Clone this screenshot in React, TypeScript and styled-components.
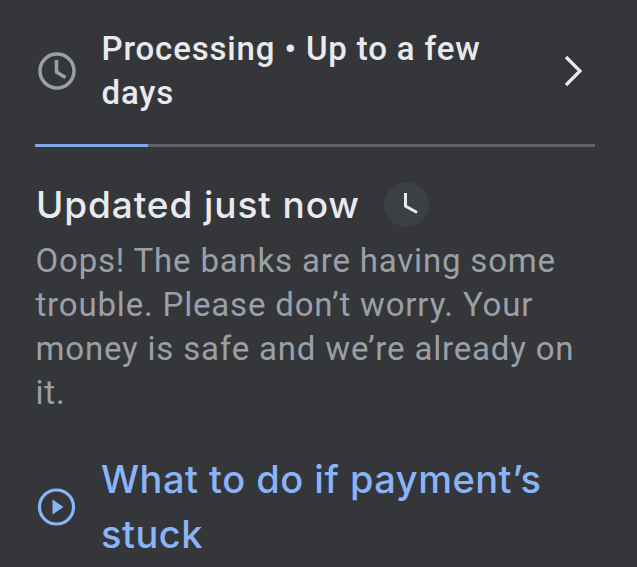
import React from "react";
import styled, { createGlobalStyle } from "styled-components";

const GlobalStyle = createGlobalStyle`
  html, body { margin: 0; padding: 0; background: #35363a; }
  body { font-family: Roboto, "Liberation Sans", sans-serif; overflow: hidden; }
`;

const Page = styled.div`
  width: 637px;
  height: 567px;
  overflow: hidden;
  background: #35363a;
  padding: 26px 42px 0 35px;
  box-sizing: border-box;
`;

const StatusRow = styled.div`
  display: flex;
  align-items: center;
  height: 90px;
`;

const StatusIcon = styled.div`
  width: 67px;
  display: flex;
  flex: none;
`;

const StatusText = styled.div`
  flex: 1;
  padding-right: 40px;
  margin-left: -0.5px;
  color: #e8eaed;
  font-size: 33px;
  font-weight: 500;
  line-height: 44px;
  letter-spacing: 0.85px;
`;

const Chevron = styled.div`
  flex: none;
  display: flex;
  margin-right: 9px;
`;

const Track = styled.div`
  height: 3px;
  margin-top: 28px;
  background: #5f6368;
`;

const TrackFill = styled.div`
  height: 100%;
  background: #80a8e6;
`;

const Heading = styled.div`
  display: flex;
  align-items: center;
  gap: 24px;
  margin-top: 35px;
`;

const HeadingText = styled.h2`
  margin: 0 0 0 1px;
  color: #e8eaed;
  font-family: Inter, Roboto, sans-serif;
  font-size: 37px;
  font-weight: 500;
  line-height: 44px;
  letter-spacing: 0.9px;
`;

const ClockBadge = styled.div`
  width: 45px;
  height: 45px;
  border-radius: 50%;
  background: #3c4043;
  display: flex;
  align-items: center;
  justify-content: center;
`;

const Body = styled.p`
  margin: 12px 0 0 0.5px;
  color: #9aa0a6;
  font-size: 33px;
  line-height: 44px;
  letter-spacing: 0.82px;
`;

const HelpRow = styled.div`
  display: flex;
  align-items: center;
  margin-top: 37px;
`;

const HelpIcon = styled.div`
  width: 66px;
  flex: none;
  display: flex;
  padding-left: 2px;
  box-sizing: border-box;
`;

const HelpLink = styled.a`
  color: #8ab4f8;
  font-family: Inter, Roboto, sans-serif;
  font-size: 38px;
  font-weight: 500;
  line-height: 55px;
  letter-spacing: 0.5px;
`;

export default function App() {
  const progress = 20.2;
  return (
    <>
      <GlobalStyle />
      <Page>
        <StatusRow>
          <StatusIcon>
            <svg width="44" height="44" viewBox="0 0 44 44" fill="none" stroke="#9aa0a6" strokeWidth="3.5">
              <circle cx="22" cy="22" r="17" />
              <path d="M21.5 11v12l9 5.5" />
            </svg>
          </StatusIcon>
          <StatusText>Processing • Up to a few days</StatusText>
          <Chevron>
            <svg width="24" height="36" viewBox="0 0 24 36" fill="none" stroke="#e8eaed" strokeWidth="3.2">
              <path d="M4 4l14 14L4 32" />
            </svg>
          </Chevron>
        </StatusRow>
        <Track>
          <TrackFill style={{ width: `${progress}%` }} />
        </Track>
        <Heading>
          <HeadingText>Updated just now</HeadingText>
          <ClockBadge>
            <svg width="45" height="45" viewBox="0 0 45 45" fill="none" stroke="#e8eaed" strokeWidth="3">
              <path d="M21.5 11v13l11.5 6.5" />
            </svg>
          </ClockBadge>
        </Heading>
        <Body>Oops! The banks are having some trouble. Please don’t worry. Your money is safe and we’re already on it.</Body>
        <HelpRow>
          <HelpIcon>
            <svg width="40" height="40" viewBox="0 0 40 40" fill="none" stroke="#8ab4f8" strokeWidth="3.2">
              <circle cx="19.5" cy="20" r="17" />
              <path d="M15.5 12.5v15l11-7.5z" fill="#8ab4f8" stroke="none" />
            </svg>
          </HelpIcon>
          <HelpLink>What to do if payment’s stuck</HelpLink>
        </HelpRow>
      </Page>
    </>
  );
}
